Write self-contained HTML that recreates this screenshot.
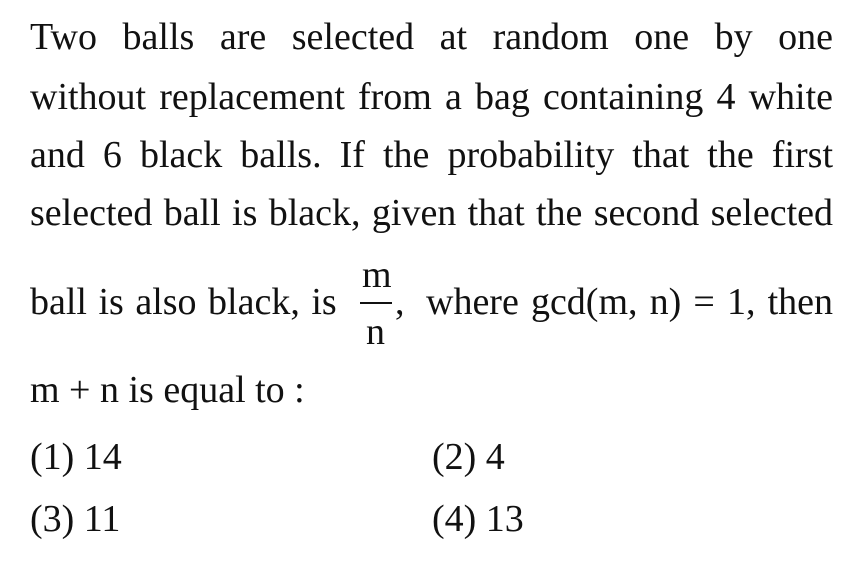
<!DOCTYPE html>
<html><head><meta charset="utf-8"><style>
body{margin:0;width:846px;height:568px;background:#fff;position:relative;overflow:hidden;font-family:"Liberation Serif",serif;font-size:38px;color:#111;}
.l{position:absolute;line-height:38px;white-space:nowrap;}
.j{position:absolute;line-height:38px;text-align:justify;text-align-last:justify;white-space:normal;}
</style></head><body>
<div class="j" style="left:30px;width:803px;top:18px">Two balls are selected at random one by one</div>
<div class="j" style="left:30px;width:803px;top:78px">without replacement from a bag containing 4 white</div>
<div class="j" style="left:30px;width:803px;top:136px">and 6 black balls. If the probability that the first</div>
<div class="j" style="left:30px;width:803px;top:194px">selected ball is black, given that the second selected</div>
<div class="l" style="left:30px;top:283px;word-spacing:2px">ball is also black, is</div>
<div class="l" style="left:362px;top:256px">m</div>
<div style="position:absolute;left:360px;top:302px;width:32px;height:2px;background:#111"></div>
<div class="l" style="left:366px;top:313px">n</div>
<div class="l" style="left:395px;top:283px">,</div>
<div class="j" style="left:426px;width:407px;top:283px">where gcd(m, n) = 1, then</div>
<div class="l" style="left:30px;top:371px">m + n is equal to :</div>
<div class="l" style="left:30px;top:438px">(1) 14</div>
<div class="l" style="left:432px;top:438px">(2) 4</div>
<div class="l" style="left:30px;top:500px">(3) 11</div>
<div class="l" style="left:432px;top:500px">(4) 13</div>
</body></html>
